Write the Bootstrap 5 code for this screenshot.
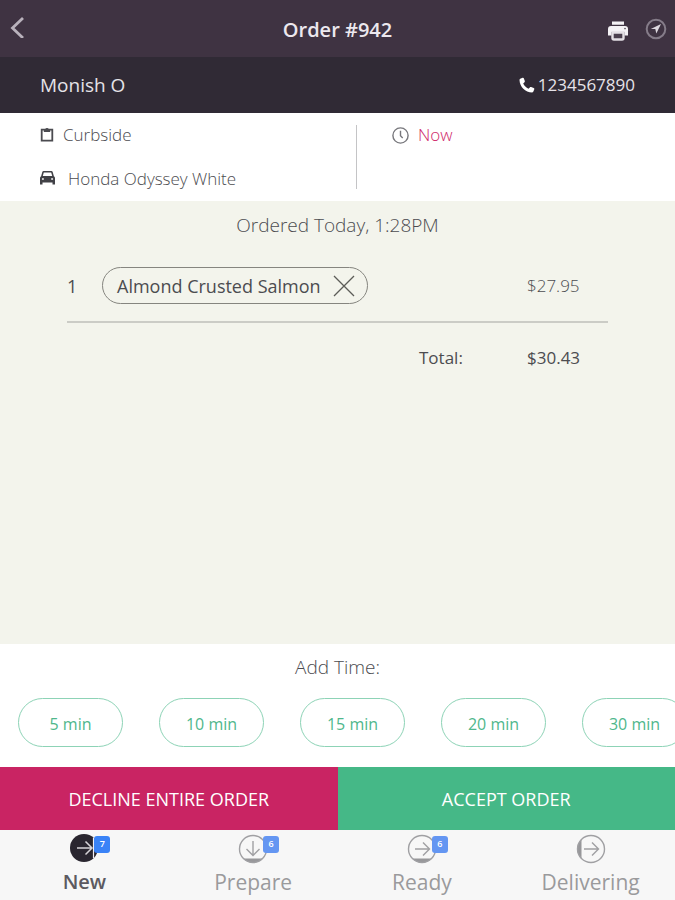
<!DOCTYPE html>
<html lang="en">
<head>
<meta charset="utf-8">
<meta name="viewport" content="width=device-width, initial-scale=1">
<title>Order #942</title>
<link href="https://cdn.jsdelivr.net/npm/bootstrap@5.3.0/dist/css/bootstrap.min.css" rel="stylesheet">
<style>
  body { font-family: "Open Sans", "Noto Sans", sans-serif; font-size: 18px; line-height: 24px; color: #4c4c50; background: #f3f4ec; }
  svg { display: block; flex: none; }
  button { font: inherit; color: inherit; }
  .title-bar { background: #3f3342; color: #ece8ee; height: 57px; }
  .title-bar h1 { font-size: 20px; line-height: 28px; font-weight: 600; padding-top: 2px; }
  .side { flex: 1 1 0; }
  .icon-btn { background: none; border: 0; padding: 0; }
  .customer { background: #302a35; color: #e6e3e8; height: 56px; padding: 0 40px; font-size: 19px; }
  .customer a { font-size: 17px; gap: 3px; }
  .info { background: #fff; font-weight: 300; font-size: 17px; padding: 10px 40px 0; height: 88px; }
  .info-main { flex: 0 0 316px; }
  .divider { flex: 0 0 1px; height: 64px; margin-top: 2px; background: #c4c4c6; }
  .info-time { padding-left: 35px; }
  .line { height: 44px; align-items: flex-start; }
  .line svg { margin-top: 4px; }
  .line span { margin-left: 9px; }
  .line .wide-gap { margin-left: 13px; }
  .line .now { color: #d0286a; }
  .caption { font-size: 19px; font-weight: 300; }
  .items { width: 541px; max-width: 100%; table-layout: fixed; margin-top: 14px; }
  .items td, .items th { padding: 0; font-weight: 400; }
  .items .amount { font-size: 17px; }
  .items .light { font-weight: 300; }
  .items tbody tr { border-bottom: 2px solid #cbccc6; height: 71px; }
  .items tfoot tr { height: 70px; }
  .c-qty { width: 35px; }
  .c-label { width: 108px; }
  .c-price { width: 81px; }
  .pill { height: 37px; border: 1px solid #85857f; border-radius: 19px; padding: 0 12px 0 14px; gap: 12px; margin-bottom: 1px; }
  .times { background: #fff; padding-top: 11px; height: 123px; }
  .time-row { gap: 36px; padding: 19px 18px 0; overflow: hidden; }
  .time-btn { flex: 0 0 105px; height: 49px; border: 1px solid #8dd3b6; border-radius: 25px; background: none; color: #4fb78c; font-size: 16px; padding-top: 3px; }
  .act { height: 63px; border: 0; border-radius: 0; color: #fff; font-size: 18px; padding-top: 2px; }
  .act-no { background: #c92463; }
  .act-yes { background: #45b887; }
  .tabs { background: #f7f7f7; height: 70px; }
  .tabs a { color: #9a9a9c; font-size: 21px; line-height: 28px; padding-top: 4px; gap: 4px; }
  .tabs a.active { color: #5c5a61; font-size: 20px; font-weight: 600; }
  .tag { position: absolute; left: 25px; top: 2px; width: 16px; height: 17px; border-radius: 3px; background: #6496f2; color: #fff; font-size: 9px; line-height: 16px; font-weight: 600; text-align: center; }
  .active .tag { background: #3a83f7; }
</style>
<script src="https://cdn.jsdelivr.net/npm/bootstrap@5.3.0/dist/js/bootstrap.bundle.min.js"></script>
</head>
<body class="d-flex flex-column min-vh-100">
<header>
  <div class="title-bar d-flex align-items-center">
    <div class="side ps-2">
      <button class="icon-btn" type="button" aria-label="Back">
        <svg width="18" height="24" viewBox="0 0 18 24" fill="none" stroke="#b9b2bc" stroke-width="2.800"><path d="M15 4 4.500 14 15 24"/></svg>
      </button>
    </div>
    <h1 class="m-0">Order #942</h1>
    <div class="side d-flex justify-content-end align-items-center gap-3 pe-2">
      <button class="icon-btn pt-1" type="button" aria-label="Print">
        <svg width="22" height="20" viewBox="0 0 22 20"><path d="M5 .5h12v3.200H5zM4 5h14c2 0 3 1.200 3 3v6.500h-3.500V11h-13v3.500H1V8c0-1.800 1-3 3-3z" fill="#f4f2f5"/><path d="M5.500 11.500h11V17q0 1.500-1.500 1.500H7Q5.500 18.500 5.500 17z" fill="#4b404e" stroke="#e4e0e5" stroke-width="2.400"/><circle cx="18" cy="7.600" r=".8" fill="#4b404e"/></svg>
      </button>
      <button class="icon-btn" type="button" aria-label="Location">
        <svg width="22" height="22" viewBox="0 0 22 22"><circle cx="11" cy="11" r="9.300" fill="none" stroke="#857c89" stroke-width="2"/><path d="M16 6 5.800 11h4.500l1 4.500z" fill="#ddd8df"/></svg>
      </button>
    </div>
  </div>
  <div class="customer d-flex align-items-center justify-content-between">
    <span>Monish O</span>
    <a class="d-flex align-items-center text-reset text-decoration-none" href="tel:1234567890">
      <svg width="16" height="16" viewBox="0 0 16 16" fill="#fff"><path d="M1.200 1.700 3.600.8c.6-.2 1 0 1.200.5l1 2.700c.2.500 0 .9-.3 1.200L4.200 6.400c1.200 2.400 2.900 4.100 5.300 5.300l1.300-1.300c.4-.4.800-.5 1.300-.3l2.600 1c.6.200.8.700.6 1.200l-.9 2.300c-.2.500-.6.800-1.200.8C6.200 15.300.7 9.800.5 2.900c0-.6.200-1 .7-1.200z"/></svg>
      1234567890</a>
  </div>
</header>
<section class="info d-flex">
  <div class="info-main">
    <div class="line d-flex">
      <svg width="14" height="16" viewBox="0 0 14 16"><path d="M1.700 2.700h10.600v11H1.700z" fill="none" stroke="#4b4b50" stroke-width="1.800"/><path d="M3.800 2.100h1.500a1.800 1.800 0 0 1 3.400 0h1.500V5H3.800z" fill="#4b4b50"/></svg>
      <span>Curbside</span>
    </div>
    <div class="line d-flex">
      <svg width="15" height="16" viewBox="0 0 15 16"><path d="M3.600 0h7.800q1 0 1.300 1l1.200 4.200q1.100.5 1.100 1.700v6.600h-2.500v-2H2.500v2H0V6.900q0-1.200 1.100-1.700L2.300 1q.3-1 1.300-1z" fill="#414146"/><path d="M3.800 1.400h7.400l1 3.600H2.800z" fill="#fff"/><circle cx="2.900" cy="8" r="1.100" fill="#ddd"/><circle cx="12.100" cy="8" r="1.100" fill="#ddd"/></svg>
      <span class="wide-gap">Honda Odyssey White</span>
    </div>
  </div>
  <div class="divider"></div>
  <div class="info-time">
    <div class="line d-flex">
      <svg width="17" height="17" viewBox="0 0 17 17" fill="none" stroke="#77777c" stroke-width="1.400"><circle cx="8.500" cy="8.500" r="7.600"/><path d="M8.500 3.800v4.900l2.200 2.300"/></svg>
      <span class="now">Now</span>
    </div>
  </div>
</section>
<main class="flex-grow-1 d-flex flex-column align-items-center">
  <p class="caption m-0 pt-2 mt-1">Ordered Today, 1:28PM</p>
  <table class="items">
    <colgroup><col class="c-qty"><col><col class="c-label"><col class="c-price"></colgroup>
    <tbody>
      <tr>
        <td>1</td>
        <td colspan="2">
          <span class="pill d-inline-flex align-items-center">Almond Crusted Salmon
            <button class="icon-btn" type="button" aria-label="Remove Almond Crusted Salmon">
              <svg width="22" height="22" viewBox="0 0 22 22" stroke="#5c5c58" stroke-width="1.300"><path d="M1 1 21 21M21 1 1 21"/></svg>
            </button>
          </span>
        </td>
        <td class="amount light">$27.95</td>
      </tr>
    </tbody>
    <tfoot>
      <tr><td></td><td></td><th class="amount text-start" scope="row">Total:</th><td class="amount">$30.43</td></tr>
    </tfoot>
  </table>
</main>
<section class="times">
  <p class="caption text-center m-0">Add Time:</p>
  <div class="time-row d-flex">
    <button class="time-btn" type="button">5 min</button>
    <button class="time-btn" type="button">10 min</button>
    <button class="time-btn" type="button">15 min</button>
    <button class="time-btn" type="button">20 min</button>
    <button class="time-btn" type="button">30 min</button>
  </div>
</section>
<div class="row g-0">
  <button class="act act-no col-6" type="button">DECLINE ENTIRE ORDER</button>
  <button class="act act-yes col-6" type="button">ACCEPT ORDER</button>
</div>
<nav class="tabs d-flex">
  <a class="active col-3 d-flex flex-column align-items-center text-decoration-none" href="#new" aria-current="page">
    <span class="position-relative">
      <svg width="30" height="30" viewBox="0 0 30 30"><circle cx="15" cy="14" r="14" fill="#2a2630"/><path d="M24.500 4v20" stroke="#f3eff5" stroke-width="1.200"/><path d="M8 14h14M16.500 7.500 23 14l-6.500 6.500" fill="none" stroke="#d6d3d8" stroke-width="1.500"/></svg>
      <span class="tag">7</span>
    </span>New</a>
  <a class="col-3 d-flex flex-column align-items-center text-decoration-none" href="#prepare">
    <span class="position-relative">
      <svg width="30" height="30" viewBox="0 0 30 30"><path d="M5 24.500h20a14 14 0 0 1-20 0z" fill="#97979a"/><g fill="none" stroke="#a0a0a3" stroke-width="1.400"><circle cx="15" cy="15" r="13.500"/><path d="M15 7v14M8.500 15 15 21.500 21.500 15"/></g></svg>
      <span class="tag">6</span>
    </span>Prepare</a>
  <a class="col-3 d-flex flex-column align-items-center text-decoration-none" href="#ready">
    <span class="position-relative">
      <svg width="30" height="30" viewBox="0 0 30 30"><path d="M5 24.500h20a14 14 0 0 1-20 0z" fill="#97979a"/><g fill="none" stroke="#a0a0a3" stroke-width="1.400"><circle cx="15" cy="15" r="13.500"/><path d="M8 15h14M16 8.500l6.500 6.500-6.500 6.500"/></g></svg>
      <span class="tag">6</span>
    </span>Ready</a>
  <a class="col-3 d-flex flex-column align-items-center text-decoration-none" href="#delivering">
    <svg width="30" height="30" viewBox="0 0 30 30"><path d="M5.500 5v20a14 14 0 0 1 0-20z" fill="#97979a"/><g fill="none" stroke="#a0a0a3" stroke-width="1.400"><circle cx="15" cy="15" r="13.500"/><path d="M8 15h14M16 8.500l6.500 6.500-6.500 6.500"/></g></svg>
    Delivering</a>
</nav>
</body>
</html>
